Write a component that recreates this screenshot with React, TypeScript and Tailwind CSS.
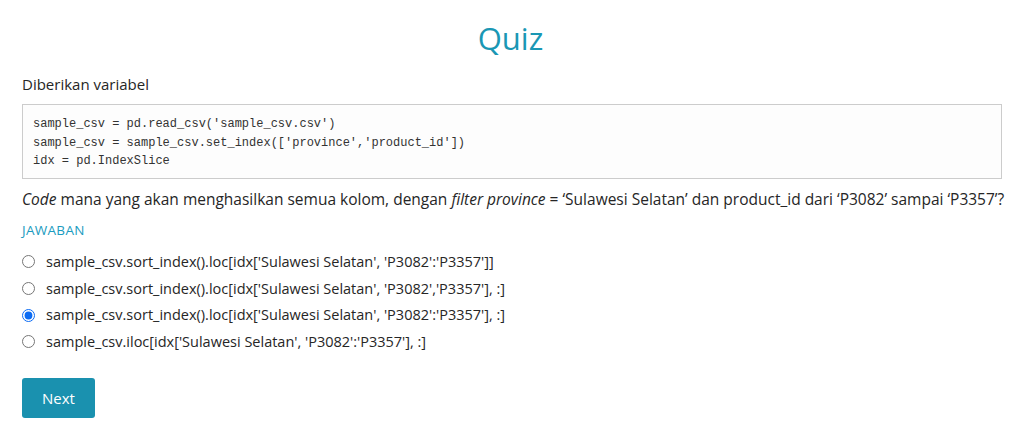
import React from "react";

const options = [
  "sample_csv.sort_index().loc[idx['Sulawesi Selatan', 'P3082':'P3357']]",
  "sample_csv.sort_index().loc[idx['Sulawesi Selatan', 'P3082','P3357'], :]",
  "sample_csv.sort_index().loc[idx['Sulawesi Selatan', 'P3082':'P3357'], :]",
  "sample_csv.iloc[idx['Sulawesi Selatan', 'P3082':'P3357'], :]",
];

export default function App() {
  return (
    <div className="w-[1021px] h-[426px] bg-white text-[#262626] font-['Open_Sans',sans-serif] px-[22px] pt-[14px]">
      <h1 className="text-center text-[31px] leading-[48px] text-[#1a97b4] font-normal">Quiz</h1>
      <p className="mt-[12px] text-[15px] leading-[20px]">Diberikan variabel</p>
      <pre className="mt-[10px] w-[980px] border border-[#ccc] bg-[#fdfdfd] px-[10px] pt-[10px] pb-[7px] font-['Liberation_Mono',monospace] text-[12px] leading-[18.5px] text-[#333]">
{`sample_csv = pd.read_csv('sample_csv.csv')
sample_csv = sample_csv.set_index(['province','product_id'])
idx = pd.IndexSlice`}
      </pre>
      <p className="mt-[9px] text-[15.5px] leading-[22px] whitespace-nowrap">
        <i>Code</i> mana yang akan menghasilkan semua kolom, dengan <i>filter province</i> = ‘Sulawesi Selatan’ dan product_id dari ‘P3082’ sampai ‘P3357’?
      </p>
      <div className="mt-[10px] text-[13.5px] leading-[20px] text-[#1a9bc0] tracking-[0.3px]">JAWABAN</div>
      <div className="mt-[9px] flex flex-col">
        {options.map((o, i) => (
          <label key={i} className="flex items-center h-[26.7px] text-[14.5px]">
            <input type="radio" name="q" defaultChecked={i === 2} className="w-[13px] h-[13px] m-0 mr-[11px] accent-[#0b6bf3]" />
            <span>{o}</span>
          </label>
        ))}
      </div>
      <button className="mt-[23px] w-[73px] h-[40px] rounded-[3px] bg-[#1a91af] text-white text-[15px] font-medium">Next</button>
    </div>
  );
}
